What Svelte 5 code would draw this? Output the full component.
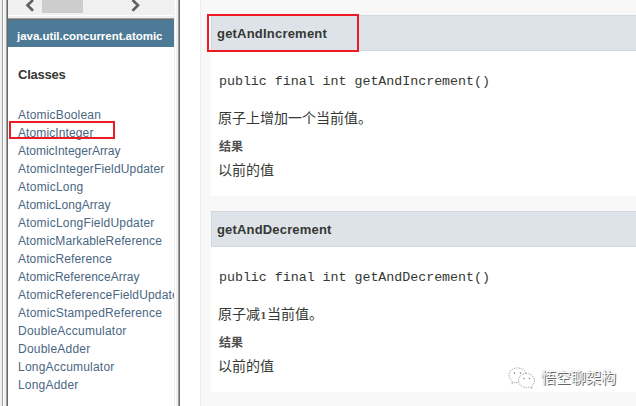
<script>
  const classes = [
    ['AtomicBoolean', 83], ['AtomicInteger', 75.5], ['AtomicIntegerArray', 102.5],
    ['AtomicIntegerFieldUpdater', 146.5], ['AtomicLong', 65.5], ['AtomicLongArray', 92.5],
    ['AtomicLongFieldUpdater', 136.5], ['AtomicMarkableReference', 144],
    ['AtomicReference', 94], ['AtomicReferenceArray', 121.5],
    ['AtomicReferenceFieldUpdater', 165], ['AtomicStampedReference', 144],
    ['DoubleAccumulator', 108.5], ['DoubleAdder', 72.5], ['LongAccumulator', 96.5], ['LongAdder', 60.5]
  ];
  const methods = [
    { name: 'getAndIncrement', before: '原子上增加一个当前值。', num: '', after: '' },
    { name: 'getAndDecrement', before: '原子减', num: '1', after: '当前值。' }
  ];
  // Spread each label to its measured width.
  function fit(node, width) {
    const natural = node.getBoundingClientRect().width;
    node.style.letterSpacing = `${(width - natural) / node.textContent.length}px`;
  }
</script>

<div class="page">
  <div class="edge"></div>
  <aside>
    <div class="scroll">
      <svg class="arrows" width="166" height="15" viewBox="0 0 166 15" fill="none" stroke="#606060" stroke-width="2.6">
        <rect x="34" y="0" width="41" height="13" fill="#cdcdcd" stroke="none" />
        <path d="M25 0 19.500 5.300 25 10.700M124.500 0 130 5.300 124.500 10.700" />
      </svg>
    </div>
    <div class="package"><span use:fit={145.5}>java.util.concurrent.atomic</span></div>
    <div class="classes">
      <h2><span use:fit={47.5}>Classes</span></h2>
      <ul>
        {#each classes as [name, width]}
          <li class:selected={name === 'AtomicInteger'}><span use:fit={width}>{name}</span></li>
        {/each}
      </ul>
    </div>
  </aside>
  <div class="splitter"></div>
  <main>
    {#each methods as m, i}
      <section>
        <h4 class:marked={i === 0}><span use:fit={i === 0 ? 110 : 114.5}>{m.name}</span></h4>
        <pre>public final int {m.name}()</pre>
        <p class="desc">{m.before}{#if m.num}<b>{m.num}</b>{/if}{m.after}</p>
        <p class="label">结果</p>
        <p class="result">以前的值</p>
      </section>
    {/each}
  </main>
  <div class="watermark">
    <svg width="28" height="23" viewBox="0 0 28 23" fill="#fff" stroke="#888" stroke-width=".7" stroke-dasharray="1.5 1">
      <path d="M18 6C16 2 12 .7 8.500 1 4 1.500 1 4.500 1 8c0 3 1.500 5 3.500 6.300L3.700 17l3-1.700c1.300.3 2.600.4 4 .2" />
      <path d="M18.500 6.500c-4.500 0-8 3-8 7s3.500 7 8 7c1 0 2-.2 3-.5l2.800 1.600-.8-2.500c2-1.500 3-3.300 3-5.600 0-4-3.500-7-8-7Z" />
      <g fill="#777" stroke="none"><circle cx="6.500" cy="6" r=".8" /><circle cx="12.500" cy="6" r=".8" /><circle cx="16" cy="11.500" r=".7" /><circle cx="21.500" cy="11.500" r=".7" /></g>
    </svg>
    <span>悟空聊架构</span>
  </div>
</div>

<style>
  :global(body) { margin: 0; overflow: hidden; }
  .page { position: relative; display: flex; width: 636px; height: 406px; overflow: hidden; background: #fff; font-family: "Liberation Sans", "Noto Sans CJK SC", sans-serif; color: #353833; }
  .edge { width: 8px; flex: none; background: linear-gradient(90deg, #f0f0f0 2px, #a0a0a0 2px 3px, #fff 3px 4px, #f0f0f0 4px 6px, #a0a0a0 6px 7px, #696969 7px); }
  aside { width: 166px; flex: none; overflow: hidden; }
  .scroll { height: 15px; background: #f0f0f0; border-bottom: 1px solid #fff; }
  .arrows { display: block; }
  .package { box-sizing: border-box; height: 29px; margin-top: 2px; padding-left: 9px; background: linear-gradient(#a0a0a0 1px, #696969 1px 2px, #4d7a97 2px); color: #fff; font-weight: bold; font-size: 11.500px; line-height: 36px; white-space: nowrap; box-shadow: 0 -2px #f0f0f0; }
  .classes { padding-left: 10px; }
  h2 { margin: 19px 0 0; font-size: 13px; line-height: 18px; height: 18px; }
  ul { margin: 22px 0 0; padding: 0; list-style: none; }
  li { position: relative; height: 18px; line-height: 18px; font-size: 12px; color: #4a6782; white-space: nowrap; }
  .selected::after { content: ""; position: absolute; left: -9px; top: -3px; width: 102px; height: 14px; border: 2px solid #ed1c24; }
  .splitter { width: 6px; flex: none; background: linear-gradient(90deg, #f0f0f0 1px, #fff 1px 2px, #f0f0f0 2px 4px, #a0a0a0 4px 5px, #696969 5px); }
  main { flex: 1; min-width: 0; margin-left: 20px; border-left: 1px solid #ededed; background: #f8f8f8; padding: 15px 0 0 10px; }
  section { height: 181px; margin-bottom: 15px; background: #fff; }
  h4 { position: relative; box-sizing: border-box; height: 36px; margin: 0; padding-left: 5px; border: 1px solid #d0d9e0; border-right: 0; background: #dee3e9; font-size: 13px; line-height: 35px; }
  .marked::after { content: ""; position: absolute; left: -5px; top: -2px; width: 148px; height: 34px; border: 2px solid #ed1c24; }
  pre { margin: 22px 0 0 8px; font: 13.333px/18px "Liberation Mono", monospace; height: 18px; letter-spacing: -.03px; }
  p { margin: 0 0 0 7px; white-space: nowrap; }
  .desc { margin-top: 17px; height: 20px; font-size: 14px; line-height: 20px; }
  .desc b { display: inline-block; width: 7px; text-align: center; color: #5a4a40; font: bold 9px/10px "DejaVu Serif", serif; }
  .label { margin: 11px 0 0 8px; height: 16px; color: #4e4e4e; font-size: 12px; line-height: 16px; font-weight: bold; }
  .result { margin-top: 5px; height: 20px; font-size: 14px; line-height: 20px; }
  .watermark { position: absolute; left: 508px; top: 366px; display: flex; align-items: center; gap: 5px; }
  .watermark span { font-size: 15px; line-height: 24px; color: #fff; text-shadow: 1px 1px 0 #666, 0 0 1px #999; white-space: nowrap; }
</style>
